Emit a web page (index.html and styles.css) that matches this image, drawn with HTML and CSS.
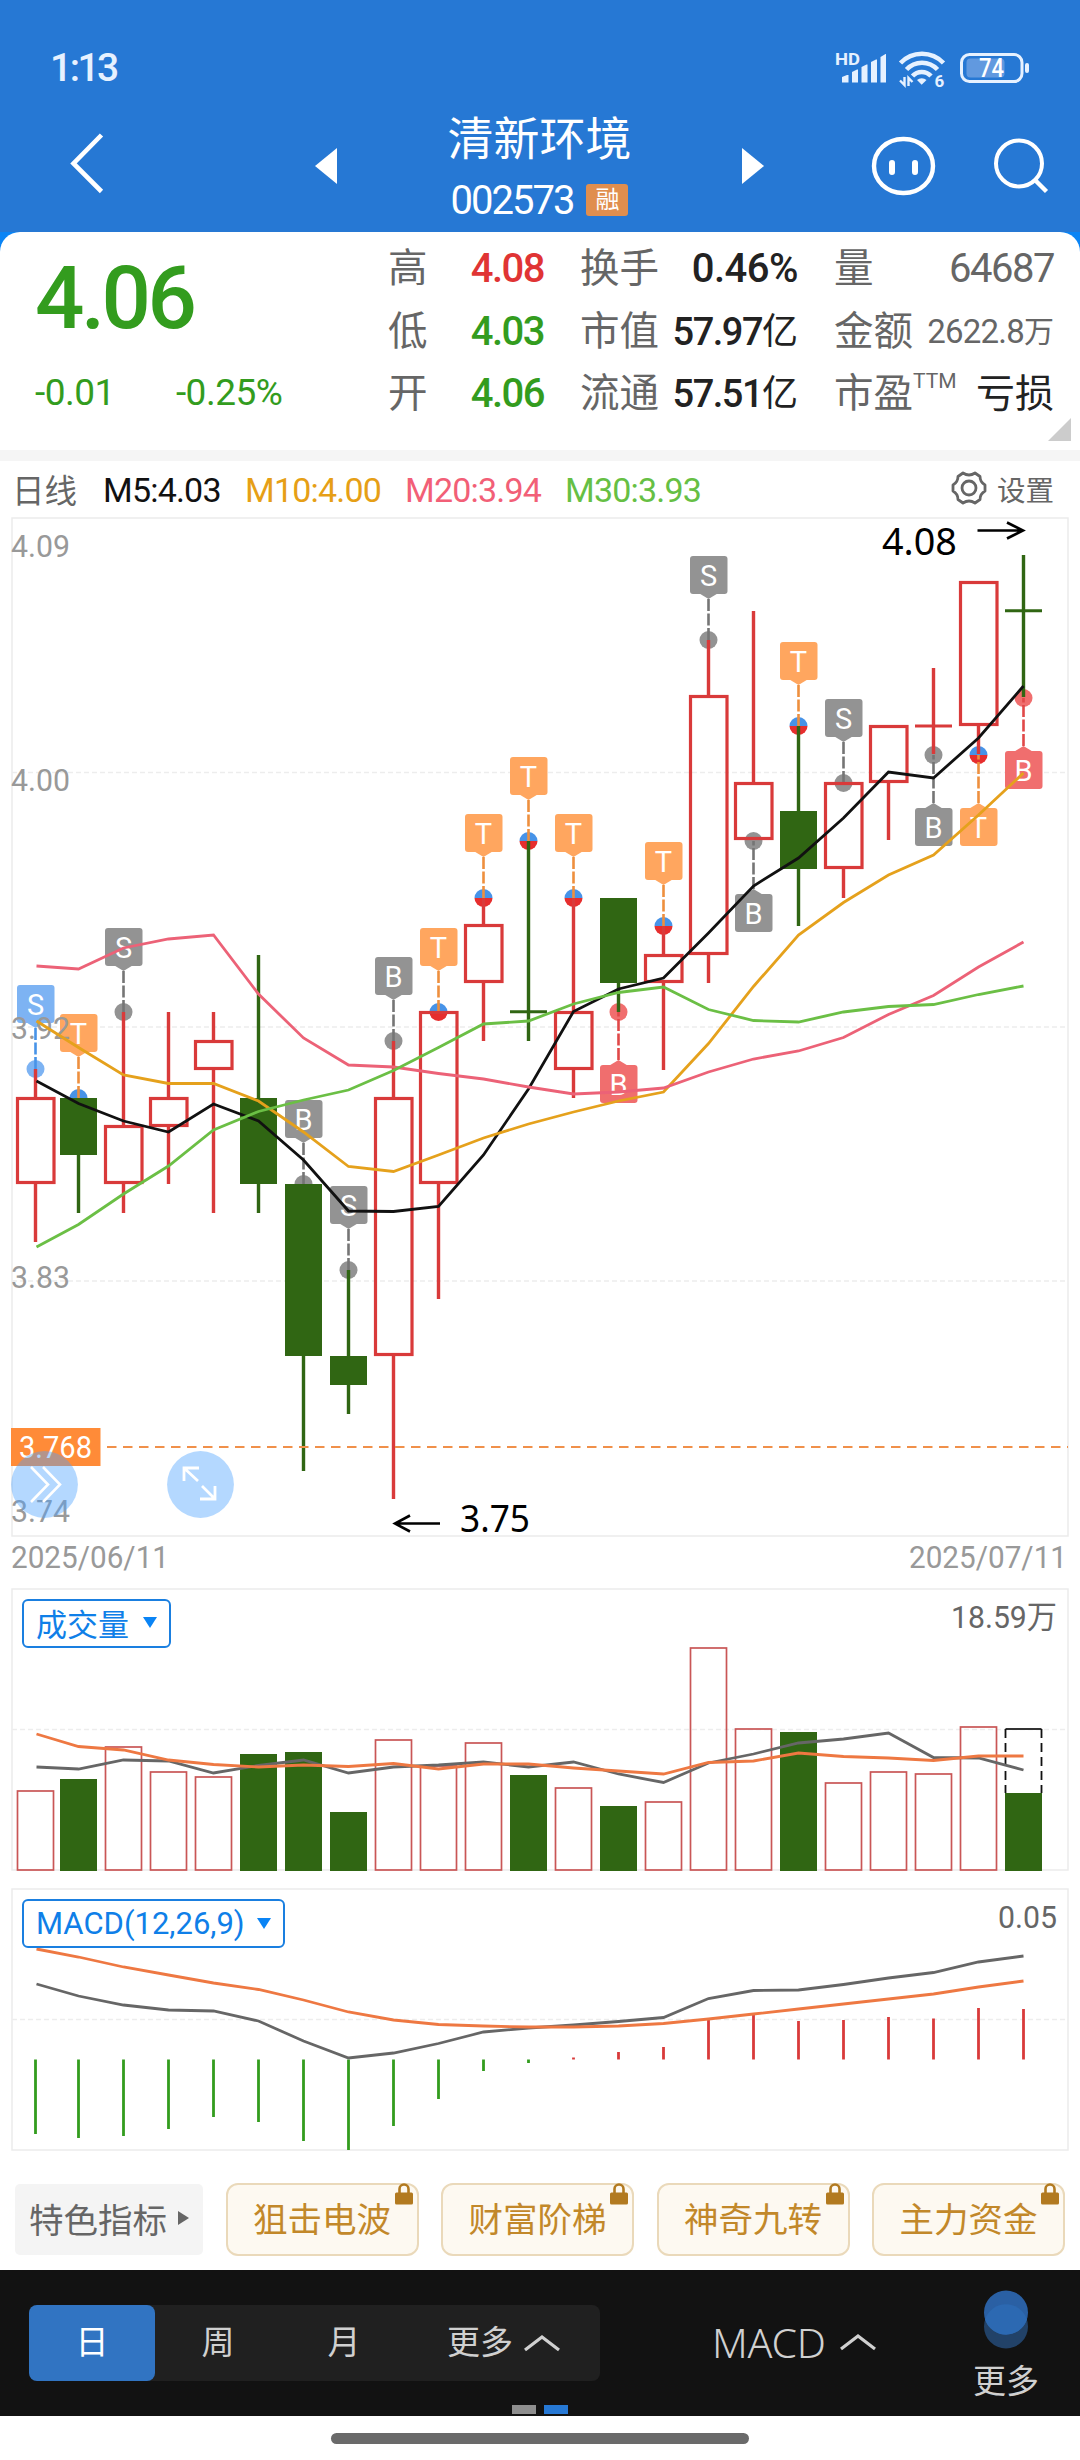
FILE: index.html
```html
<!DOCTYPE html>
<html lang="zh-CN">
<head>
  <meta charset="UTF-8">
  <meta name="viewport" content="width=device-width, initial-scale=1.0">
  <title>清新环境 002573</title>
  <link rel="stylesheet" href="styles.css">
</head>
<body>

  <header class="top">
    <div class="status">
      <span class="time">1:13</span>
      <svg class="status-icons" width="200" height="44" viewBox="832 46 200 44">
        <text x="835" y="64.500" class="hd" textLength="25" lengthAdjust="spacingAndGlyphs">HD</text>
        <g fill="#e6f1ff">
          <path d="M842 82.500v-5.500l5-2h1.500v7.500z"/>
          <path d="M852 82.500V72l5-2.500h1v13z"/>
          <path d="M861.500 82.500V67l5-2.500h1v18z"/>
          <path d="M871 82.500V62l5-2.500h1v23z"/>
          <path d="M880.500 82.500V57l5-3h.5v28.500z"/>
          <path d="M917 80a7 7 0 0 1 9.500 0l-4.800 4.800z"/>
          <rect x="1025" y="63" width="4" height="10" rx="2"/>
        </g>
        <g fill="none" stroke="#e6f1ff" stroke-width="4.500">
          <path d="M900.500 63a29.500 29.500 0 0 1 43 0"/>
          <path d="M906.500 69.500a21 21 0 0 1 31 0"/>
          <path d="M912.500 76a12.500 12.500 0 0 1 18.500 0"/>
          <path d="M904.500 77v8l-4.500-4.500M908.500 86v-8l4 4" stroke-width="2.400"/>
          <rect x="961.500" y="54.500" width="60.500" height="27" rx="8" stroke-width="3"/>
        </g>
        <rect x="966.500" y="58.500" width="38" height="19" rx="4" fill="#6199df"/>
        <text x="934.500" y="86.500" class="six">6</text>
        <text x="979" y="77" class="bat" textLength="25" lengthAdjust="spacingAndGlyphs">74</text>
      </svg>
    </div>
    <nav class="nav">
      <svg class="nav-back" width="40" height="64" viewBox="68 131 40 64"><path d="M101.500 135L73.500 163.500L101.500 191.500" fill="none" stroke="#fff" stroke-width="4.600"/></svg>
      <svg class="nav-prev" width="22" height="36" viewBox="0 0 22 36"><path d="M22 0v36L0 18z" fill="#fff"/></svg>
      <div class="title">
        <h1>清新环境</h1>
        <div class="code"><span class="code-num">002573</span><span class="badge">融</span></div>
      </div>
      <svg class="nav-next" width="22" height="36" viewBox="0 0 22 36"><path d="M0 0v36L22 18z" fill="#fff"/></svg>
      <svg class="nav-bot" width="66" height="62" viewBox="870.500 135 66 62">
        <rect x="874.500" y="139" width="59" height="54" rx="29" ry="27" fill="none" stroke="#fff" stroke-width="4.400"/>
        <path d="M892.500 163v9M915.500 163v9" stroke="#fff" stroke-width="6" stroke-linecap="round"/>
      </svg>
      <svg class="nav-search" width="60" height="60" viewBox="990 137 60 60">
        <circle cx="1019" cy="163.500" r="23" fill="none" stroke="#fff" stroke-width="4"/>
        <path d="M1035 180L1046.500 191.500" stroke="#fff" stroke-width="4.400"/>
      </svg>
    </nav>
  </header>

  <section class="quote-wrap">
    <div class="quote">
      <div class="price-box">
        <div class="price">4.06</div>
        <div class="change"><span>-0.01</span><span>-0.25%</span></div>
      </div>
      <div class="stats">
        <span class="lab">高</span><span class="val up">4.08</span>
        <span class="lab">换手</span><span class="val wide">0.46%</span>
        <span class="lab">量</span><span class="val grey">64687</span>
        <span class="lab">低</span><span class="val down">4.03</span>
        <span class="lab">市值</span><span class="val tight">57.97<i>亿</i></span>
        <span class="lab">金额</span><span class="val grey small">2622.8<i>万</i></span>
        <span class="lab">开</span><span class="val down">4.06</span>
        <span class="lab">流通</span><span class="val tight">57.51<i>亿</i></span>
        <span class="lab">市盈<sup>TTM</sup></span><span class="val han">亏损</span>
      </div>
      <div class="fold"></div>
    </div>
  </section>

  <section class="legend">
    <span class="period">日线</span>
    <span class="ma m5">M5:4.03</span>
    <span class="ma m10">M10:4.00</span>
    <span class="ma m20">M20:3.94</span>
    <span class="ma m30">M30:3.93</span>
    <span class="setting">
      <svg width="36" height="36" viewBox="-18 -18 36 36" fill="none" stroke="#666" stroke-width="2.800">
        <path d="M-6-15Q0-11 6-15L11-11.500Q11-6 16-3V3Q11 6 11 11.500L6 15Q0 11-6 15L-11 11.500Q-11 6-16 3V-3Q-11-6-11-11.500z" stroke-linejoin="round"/>
        <circle r="7"/>
      </svg>
      设置
    </span>
  </section>

  <section class="panel">
    <svg id="kline" width="1080" height="1071" viewBox="0 517 1080 1071"></svg>
  </section>

  <section class="panel">
    <svg id="volume" width="1080" height="300" viewBox="0 1588 1080 300"></svg>
    <button class="picker">成交量<i class="tri"></i></button>
  </section>

  <section class="panel">
    <svg id="macd" width="1080" height="272" viewBox="0 1888 1080 272"></svg>
    <button class="picker macd-picker">MACD(12,26,9)<i class="tri"></i></button>
  </section>

  <section class="chips">
    <div class="chip-lead">特色指标<i></i></div>
    <div class="chip">狙击电波<svg class="lock" width="18" height="22" viewBox="0 0 18 22"><path d="M4.500 10V6a4.500 4.500 0 0 1 9 0v4" fill="none" stroke="#b27a20" stroke-width="2.600"/><rect y="9.500" width="18" height="12" rx="1.500" fill="#b27a20"/></svg></div>
    <div class="chip">财富阶梯<svg class="lock" width="18" height="22" viewBox="0 0 18 22"><path d="M4.500 10V6a4.500 4.500 0 0 1 9 0v4" fill="none" stroke="#b27a20" stroke-width="2.600"/><rect y="9.500" width="18" height="12" rx="1.500" fill="#b27a20"/></svg></div>
    <div class="chip">神奇九转<svg class="lock" width="18" height="22" viewBox="0 0 18 22"><path d="M4.500 10V6a4.500 4.500 0 0 1 9 0v4" fill="none" stroke="#b27a20" stroke-width="2.600"/><rect y="9.500" width="18" height="12" rx="1.500" fill="#b27a20"/></svg></div>
    <div class="chip">主力资金<svg class="lock" width="18" height="22" viewBox="0 0 18 22"><path d="M4.500 10V6a4.500 4.500 0 0 1 9 0v4" fill="none" stroke="#b27a20" stroke-width="2.600"/><rect y="9.500" width="18" height="12" rx="1.500" fill="#b27a20"/></svg></div>
  </section>

  <footer class="bottom">
    <div class="tabs">
      <span class="tab active">日</span>
      <span class="tab">周</span>
      <span class="tab">月</span>
      <span class="tab more">更多<svg width="36" height="18" viewBox="0 0 36 18"><path d="M1 16L18 3L35 16" fill="none" stroke="#d0d0d0" stroke-width="3.200"/></svg></span>
    </div>
    <div class="index-pick">MACD<svg width="36" height="18" viewBox="0 0 36 18"><path d="M1 16L18 3L35 16" fill="none" stroke="#d0d0d0" stroke-width="3.200"/></svg></div>
    <div class="more-btn">
      <svg width="46" height="60" viewBox="0 0 46 60"><circle cx="23" cy="36.500" r="22" fill="#224268"/><circle cx="23" cy="22.500" r="22" fill="#2a60a4"/><path d="M2.100 29.500A22 22 0 0 1 43.900 29.500A22 22 0 0 1 2.100 29.500z" fill="#2c69b2"/></svg>
      <span>更多</span>
    </div>
    <div class="dots"><i></i><i class="on"></i></div>
  </footer>
  <div class="home"><i></i></div>

  <script src="chart.js"></script>
</body>
</html>
```
FILE: styles.css
```css
* {
  box-sizing: border-box;
}
body {
  margin: 0;
  width: 1080px;
  height: 2460px;
  background-color: #ffffff;
  font-family: Roboto, "Noto Sans CJK SC", sans-serif;
  color: #222222;
  overflow: hidden;
}
svg {
  display: block;
}
i {
  font-style: normal;
}

/* header */
.top {
  height: 232px;
  background-color: #2678d4;
  color: #ffffff;
}
.status {
  height: 104px;
  padding: 46px 48px 0 50px;
  display: flex;
  justify-content: space-between;
}
.time {
  font-size: 39px;
  line-height: 45px;
  font-weight: 500;
  letter-spacing: -2.5px;
  color: #e6f1ff;
}
.hd {
  font: bold 17px Roboto, sans-serif;
  fill: #e6f1ff;
}
.six {
  font: bold 17px Roboto, sans-serif;
  fill: #e6f1ff;
}
.bat {
  font: 500 25px Roboto, sans-serif;
  fill: #ffffff;
}
.nav {
  height: 128px;
  display: grid;
  grid-template-columns: 68px 40px 207px 22px 405px 22px 106px 66px 54px 60px;
  align-items: start;
}
.nav-back {
  grid-column: 2;
  margin-top: 27px;
}
.nav-prev {
  grid-column: 4;
  margin-top: 44px;
}
.title {
  text-align: center;
}
.nav-next {
  margin-top: 44px;
}
.nav-bot {
  grid-column: 8;
  margin-top: 31px;
}
.nav-search {
  grid-column: 10;
  margin-top: 33px;
}
h1 {
  margin: 6px 0 0;
  font-size: 46px;
  line-height: 58px;
  font-weight: 400;
}
.code {
  display: flex;
  justify-content: center;
  align-items: center;
  gap: 13px;
  height: 64px;
}
.code-num {
  font-size: 40px;
  letter-spacing: -2px;
}
.badge {
  width: 42px;
  height: 32px;
  border-radius: 3px;
  background-color: #e08e4e;
  font-size: 24px;
  line-height: 32px;
}

/* quote card */
.quote-wrap {
  height: 229px;
  background: linear-gradient(#0a84f5 50%, #f5f5f5 50%);
}
.quote {
  position: relative;
  height: 218px;
  background-color: #ffffff;
  border-radius: 20px 20px 0 0;
  display: flex;
}
.price-box {
  width: 388px;
  padding: 16px 0 0 35px;
  color: #339c1e;
}
.price {
  font-size: 87px;
  line-height: 100px;
  font-weight: 500;
  letter-spacing: -3.5px;
}
.change {
  display: flex;
  gap: 61px;
  margin-top: 21px;
  font-size: 37px;
  line-height: 48px;
  letter-spacing: -0.5px;
}
.stats {
  width: 667px;
  display: grid;
  grid-template-columns: 82px 74px 115px 139px 119px 137px;
  grid-template-rows: repeat(3, 62.5px);
  padding-top: 6px;
  line-height: 62px;
}
.lab {
  font-size: 39.5px;
  color: #666666;
  white-space: nowrap;
}
.stats > .lab:nth-child(6n+3),
.stats > .lab:nth-child(6n+5) {
  padding-left: 36px;
}
.val {
  font-size: 40px;
  font-weight: 500;
  letter-spacing: -1.5px;
  text-align: right;
  white-space: nowrap;
  display: flex;
  justify-content: flex-end;
}
.val i {
  font-size: 36px;
  font-weight: 400;
  letter-spacing: 0;
}
.val.wide {
  letter-spacing: -0.5px;
}
.val.tight {
  font-size: 38px;
}
.val.small {
  font-size: 33px;
  letter-spacing: -0.8px;
}
.val.small i {
  font-size: 30px;
}
.val.han {
  font-size: 39px;
  font-weight: 400;
  letter-spacing: 0;
}
.lab sup {
  font-size: 21px;
  line-height: 1;
  vertical-align: 19px;
}
.up {
  color: #e03434;
}
.down {
  color: #339c1e;
}
.val.grey {
  color: #666666;
  font-weight: 400;
}
.fold {
  position: absolute;
  right: 9px;
  bottom: 9px;
  border-left: 23px solid transparent;
  border-bottom: 23px solid #cccccc;
}

/* legend */
.legend {
  height: 56px;
  padding: 0 26px 2px 12px;
  display: flex;
  align-items: center;
  font-size: 34px;
}
.period {
  width: 91px;
  font-size: 32.5px;
  color: #666666;
}
.ma {
  width: 160px;
  padding-top: 3px;
  letter-spacing: -0.8px;
}
.m5 {
  width: 142px;
  color: #111111;
}
.m10 {
  color: #e69f16;
}
.m20 {
  color: #f25f77;
}
.m30 {
  color: #66bf44;
}
.setting {
  margin-left: auto;
  display: flex;
  align-items: center;
  gap: 10px;
  font-size: 28.5px;
  color: #666666;
}

/* chart panels */
.panel {
  position: relative;
}
.frame {
  fill: none;
  stroke: #ebebeb;
  stroke-width: 1.5;
}
.grid {
  stroke: #ededed;
  stroke-width: 1.5;
  stroke-dasharray: 5 3;
}
.axis {
  font: 32px Roboto, "Noto Sans CJK SC", sans-serif;
  fill: #999999;
}
.axis.dark {
  fill: #666666;
}
.extreme {
  font: 38px "Noto Sans", sans-serif;
  fill: #000000;
}
.flag {
  font: 29px Roboto, sans-serif;
  fill: #ffffff;
  text-anchor: middle;
}
.tag {
  font: 31px Roboto, sans-serif;
  fill: #ffffff;
}
.picker {
  position: absolute;
  left: 22px;
  top: 11px;
  width: 149px;
  height: 49px;
  padding: 0 12px 2px;
  display: flex;
  align-items: center;
  justify-content: space-between;
  border: 2px solid #1a7fe0;
  border-radius: 6px;
  background-color: #ffffff;
  font-family: Roboto, "Noto Sans CJK SC", sans-serif;
  font-size: 31px;
  color: #0f7fe8;
}
.macd-picker {
  width: 263px;
  padding-top: 2px;
}
.tri {
  border: 7.5px solid transparent;
  border-top: 11px solid #0a84f5;
  border-bottom: 0;
}

/* indicator chips */
.chips {
  height: 110px;
  padding: 23px 15px 0;
  display: flex;
  justify-content: space-between;
  font-size: 34.5px;
}
.chip-lead {
  width: 188px;
  height: 71px;
  margin-top: 1px;
  padding-bottom: 3px;
  display: flex;
  align-items: center;
  justify-content: center;
  gap: 11px;
  border-radius: 5px;
  background-color: #f4f4f4;
  color: #666666;
}
.chip-lead i {
  border: 7.5px solid transparent;
  border-left: 11px solid #666666;
  border-right: 0;
}
.chip {
  position: relative;
  width: 193px;
  height: 73px;
  line-height: 70px;
  text-align: center;
  border: 2px solid #ead9ba;
  border-radius: 12px;
  background-color: #fdf9f1;
  color: #c2882a;
}
.lock {
  position: absolute;
  right: 4px;
  top: -2px;
}

/* bottom bar */
.bottom {
  position: relative;
  height: 146px;
  padding-left: 29px;
  display: flex;
  align-items: flex-start;
  background-color: #121212;
  color: #d0d0d0;
  font-size: 33px;
}
.tabs {
  margin-top: 35px;
  width: 571px;
  height: 76px;
  display: flex;
  border-radius: 8px;
  background-color: #202020;
  line-height: 76px;
}
.tab {
  width: 126px;
  text-align: center;
}
.tab.active {
  border-radius: 8px;
  background-color: #3174c2;
  color: #ffffff;
}
.tab.more {
  width: 193px;
  display: flex;
  align-items: center;
  justify-content: center;
  gap: 11px;
}
.index-pick {
  margin-top: 35px;
  margin-left: 112px;
  height: 74px;
  width: 164px;
  display: flex;
  align-items: center;
  justify-content: space-between;
  font-family: "Noto Sans", sans-serif;
  font-size: 41px;
  font-weight: 300;
  letter-spacing: -0.2px;
}
.more-btn {
  margin: 20px 0 0 97px;
  width: 66px;
  display: flex;
  flex-direction: column;
  align-items: center;
}
.more-btn span {
  margin-top: 8px;
  line-height: 48px;
}
.dots {
  position: absolute;
  left: 512px;
  bottom: 2px;
  display: flex;
  gap: 8px;
}
.dots i {
  width: 24px;
  height: 9px;
  background-color: #8e8e8e;
}
.dots .on {
  background-color: #2678d4;
}
.home {
  padding-top: 17px;
}
.home i {
  display: block;
  width: 418px;
  height: 11px;
  margin: 0 auto;
  border-radius: 6px;
  background-color: #6a6a6a;
}
```
FILE: chart.js
```js
var RED = '#d93a3a', GREEN = '#306613';

// one column every 45px, the first one sits slightly to the right
function colX(i) {
  return i === 0 ? 35.5 : 33.5 + i * 45;
}

function line(x1, y1, x2, y2, color, w, extra) {
  return '<line x1="' + x1 + '" y1="' + y1 + '" x2="' + x2 + '" y2="' + y2 + '" stroke="' + color + '" stroke-width="' + w + '" ' + (extra || '') + '/>';
}

function rect(x, y, w, h, attrs) {
  return '<rect x="' + x + '" y="' + y + '" width="' + w + '" height="' + h + '" ' + attrs + '/>';
}

function curve(values, color, w) {
  var pts = values.map(function (v, i) { return (i === 0 ? 36.5 : colX(i)) + ',' + v; }).join(' ');
  return '<polyline points="' + pts + '" fill="none" stroke="' + color + '" stroke-width="' + w + '"/>';
}

function label(x, y, len, text, cls) {
  return '<text x="' + x + '" y="' + y + '" textLength="' + len + '" lengthAdjust="spacingAndGlyphs" class="' + cls + '">' + text + '</text>';
}

function gridLine(y) {
  return '<line class="grid" x1="12" y1="' + y + '" x2="1068" y2="' + y + '"/>';
}

function frame(y, h) {
  return rect(12, y, 1056, h, 'class="frame"');
}

// [type, wick top, body top, body bottom, wick bottom]
var candles = [
  ['r', 1069, 1097, 1184, 1242], ['g', 1098, 1098, 1155, 1213], ['r', 1012, 1125, 1184, 1213],
  ['r', 1012, 1097, 1127, 1184], ['r', 1012, 1040, 1070, 1213], ['g', 955, 1098, 1184, 1213],
  ['g', 1184, 1184, 1356, 1471], ['g', 1270, 1356, 1385, 1414], ['r', 1041, 1097, 1356, 1499],
  ['r', 1011, 1011, 1184, 1299], ['r', 898, 924, 983, 1041], ['g', 841, 1011.7, 1011.7, 1041],
  ['r', 898, 1011, 1070, 1098], ['g', 898, 898, 983, 1012], ['r', 926, 954, 983, 1070],
  ['r', 640, 695, 955, 983], ['r', 611, 782, 840, 840], ['g', 726, 811, 869, 926],
  ['r', 782, 782, 869, 898], ['r', 725, 725, 783, 840], ['r', 668, 726, 726, 754],
  ['r', 581, 581, 726, 754], ['g', 555, 610.7, 610.7, 697]
];

// [column, letter, colour, dot y, direction]
var flags = [
  [0, 'S', 'blue', 1069, -1], [1, 'T', 'orange', 1098, -1], [2, 'S', 'grey', 1012, -1],
  [6, 'B', 'grey', 1184, -1], [7, 'S', 'grey', 1270, -1], [8, 'B', 'grey', 1041, -1],
  [9, 'T', 'orange', 1012, -1], [10, 'T', 'orange', 898, -1], [11, 'T', 'orange', 841, -1],
  [12, 'T', 'orange', 898, -1], [13, 'B', 'red', 1012, 1], [14, 'T', 'orange', 926, -1],
  [15, 'S', 'grey', 640, -1], [16, 'B', 'grey', 841, 1], [17, 'T', 'orange', 726, -1],
  [18, 'S', 'grey', 783, -1], [20, 'B', 'grey', 755, 1], [21, 'T', 'orange', 755, 1],
  [22, 'B', 'red', 698, 1]
];
var flagFill = { blue: '#7db3f3', orange: '#ffa65f', grey: '#939393', red: '#f06e6e' };
var flagStem = { blue: '#4793e8', orange: '#ee8f3e', grey: '#757575', red: '#e04848' };

function drawFlag(f) {
  var x = colX(f[0]), fill = flagFill[f[2]], y = f[3], d = f[4], out;
  var top = d < 0 ? y - 84 : y + 53;
  var tip = d < 0 ? y - 41 : y + 48;
  var base = d < 0 ? y - 46.5 : y + 53.5;
  if (f[2] === 'orange') {
    out = '<path d="M' + (x - 9) + ' ' + y + 'a9 9 0 0 1 18 0z" fill="#4793e8"/>' +
      '<path d="M' + (x - 9) + ' ' + y + 'a9 9 0 0 0 18 0z" fill="#e62e2e"/>';
  } else {
    out = '<circle cx="' + x + '" cy="' + y + '" r="9" fill="' + fill + '"/>';
  }
  out += line(x, tip, x, y, flagStem[f[2]], 2.6, 'stroke-dasharray="12 2.5"');
  out += '<path d="M' + (x - 9) + ' ' + base + 'L' + x + ' ' + tip + 'L' + (x + 9) + ' ' + base + 'z" fill="' + fill + '"/>';
  out += rect(x - 18.5, top, 37.5, 38, 'rx="3" fill="' + fill + '"');
  out += '<text class="flag" x="' + x + '" y="' + (top + 30) + '">' + f[1] + '</text>';
  return out;
}

function drawCandle(c, i) {
  var x = colX(i), color = c[0] === 'r' ? RED : GREEN, out = '';
  if (c[2] === c[3]) {
    return line(x, c[1], x, c[4], color, 3.4) + line(x - 18.5, c[2], x + 18.5, c[2], color, 3);
  }
  if (c[1] < c[2]) out += line(x, c[1], x, c[2], color, 3.4);
  if (c[4] > c[3]) out += line(x, c[3], x, c[4], color, 3.4);
  if (c[0] === 'g') {
    out += rect(x - 18.5, c[2], 37, c[3] - c[2], 'fill="' + GREEN + '"');
  } else {
    out += rect(x - 18, c[2] + 1.5, 36.5, c[3] - c[2] - 3, 'fill="none" stroke="' + RED + '" stroke-width="3.2"');
  }
  return out;
}

var m5 = [1081, 1103.5, 1121, 1132, 1104, 1121, 1160, 1211, 1211.5, 1206.5, 1155, 1089, 1011.5, 989, 978, 933, 886, 858, 818, 772, 778, 738, 686];
var m10 = [1021, 1047.5, 1075, 1083.5, 1083.5, 1101, 1132, 1166.5, 1171.5, 1155, 1138, 1124, 1112, 1101, 1092, 1043.5, 986.5, 935, 902.5, 875, 855, 815, 773];
var m20 = [966, 969, 948, 939, 935, 994, 1038, 1065, 1067, 1073.5, 1079, 1087, 1094, 1092, 1088, 1072, 1059, 1051, 1037.5, 1014.5, 995.5, 967, 942];
var m30 = [1247, 1224.5, 1194, 1166, 1130, 1111.5, 1100, 1090, 1070.5, 1047.5, 1024, 1021, 1004, 992.5, 987, 1009.5, 1020.5, 1022, 1012, 1006.5, 1004.5, 994.5, 986];

var k = frame(518, 1018) + gridLine(772.5) + gridLine(1027) + gridLine(1281);
k += flags.map(drawFlag).join('');
k += candles.map(drawCandle).join('');
k += line(107, 1447, 1068, 1447, '#f0904a', 2, 'stroke-dasharray="9.5 6.5"');
k += label(11, 557, 59, '4.09', 'axis') + label(11, 791, 59, '4.00', 'axis') + label(11, 1039, 59, '3.92', 'axis');
k += label(11, 1287.5, 59, '3.83', 'axis') + label(11, 1522, 59, '3.74', 'axis');
k += curve(m5, '#111', 2.8) + curve(m10, '#e5a11c', 2.8) + curve(m20, '#ec6277', 2.8) + curve(m30, '#6bbf45', 2.8);
k += rect(11, 1428, 89.5, 38, 'fill="#ff8b38"') + label(19, 1458, 73, '3.768', 'tag');
k += '<circle cx="44.5" cy="1484.5" r="33.4" fill="#4da3ff" fill-opacity=".42"/>';
k += '<path d="M31 1467L48 1484.5L31 1502M43 1467L60 1484.5L43 1502" fill="none" stroke="#fff" stroke-width="2.6"/>';
k += '<circle cx="200.5" cy="1484.5" r="33.4" fill="#b4d8ff"/>';
k += '<path d="M198 1481L184 1468M184 1481V1468H199M202 1486L215 1499M215 1486V1499H200" fill="none" stroke="#fff" stroke-width="2.8"/>';
k += label(882, 555, 75, '4.08', 'extreme') + label(460, 1532, 70, '3.75', 'extreme');
k += '<path d="M977.5 530.5H1023M1007 522.5L1023 530.5L1007 538.5M440 1523.5H395M410 1515.5L395 1523.5L410 1531.5" fill="none" stroke="#000" stroke-width="2.6"/>';
k += label(11, 1568, 158, '2025/06/11', 'axis') + label(909, 1568, 158, '2025/07/11', 'axis');
document.getElementById('kline').innerHTML = k;

// volume
var volTop = [1790, 1779, 1746, 1771, 1776, 1754, 1752, 1812, 1739, 1765, 1742, 1775, 1787, 1806, 1801, 1647, 1728, 1732, 1782, 1771, 1773, 1726, 1793];
var vol5 = [1767, 1769, 1760, 1761, 1773, 1765.5, 1760, 1773, 1767, 1765, 1762, 1767, 1762, 1774, 1782.5, 1763, 1754, 1743, 1739, 1733, 1757.5, 1758, 1770];
var vol10 = [1734, 1746.5, 1750, 1760, 1764.5, 1767, 1765, 1766.5, 1763.5, 1769, 1764, 1764, 1768, 1771, 1774, 1762.5, 1761, 1753, 1756.5, 1758, 1760.5, 1756, 1756];
var v = frame(1589, 281) + gridLine(1729.5);
volTop.forEach(function (t, i) {
  var x = colX(i);
  if (candles[i][0] === 'g') {
    v += rect(x - 18.5, t, 37, 1871 - t, 'fill="' + GREEN + '"');
  } else {
    v += rect(x - 18, t + 1, 36, 1869 - t, 'fill="none" stroke="#c95656" stroke-width="1.7"');
  }
});
// expected volume of the running day
v += '<path d="M1005.5 1729H1041.5" stroke="#333" stroke-width="2"/><path d="M1005.5 1729V1793M1041.5 1729V1793" stroke="#111" stroke-width="1.8" stroke-dasharray="9 5"/>';
v += curve(vol5, '#666', 2.8) + curve(vol10, '#ee7842', 2.8);
v += label(951, 1628, 106, '18.59万', 'axis dark');
document.getElementById('volume').innerHTML = v;

// macd
var zero = 2059.5;
var hist = [2134, 2138, 2136, 2129, 2117, 2122, 2141, 2150, 2126, 2099, 2071, 2063, 2057.5, 2052, 2047, 2020, 2015, 2021, 2020, 2017, 2018.5, 2008, 2009];
var dif = [1984, 1996, 2005, 2010, 2011, 2021, 2041, 2058, 2053, 2043.5, 2032, 2028, 2025, 2021.5, 2017.5, 1998.5, 1990.5, 1990, 1984.5, 1978, 1972.5, 1962, 1956];
var dea = [1949, 1957, 1967, 1975, 1983, 1989.5, 2000, 2012, 2020, 2024.5, 2026, 2027, 2027, 2026, 2023.5, 2019, 2014, 2009, 2004, 1999, 1994, 1987, 1981];
var m = frame(1889, 261) + gridLine(2019.5);
hist.forEach(function (h, i) {
  m += line(colX(i), zero, colX(i), h, h > zero ? '#339c1e' : '#d93a3a', 2.8);
});
m += curve(dif, '#666', 2.8) + curve(dea, '#ee7842', 2.8);
m += label(998, 1928, 59, '0.05', 'axis dark');
document.getElementById('macd').innerHTML = m;
```
